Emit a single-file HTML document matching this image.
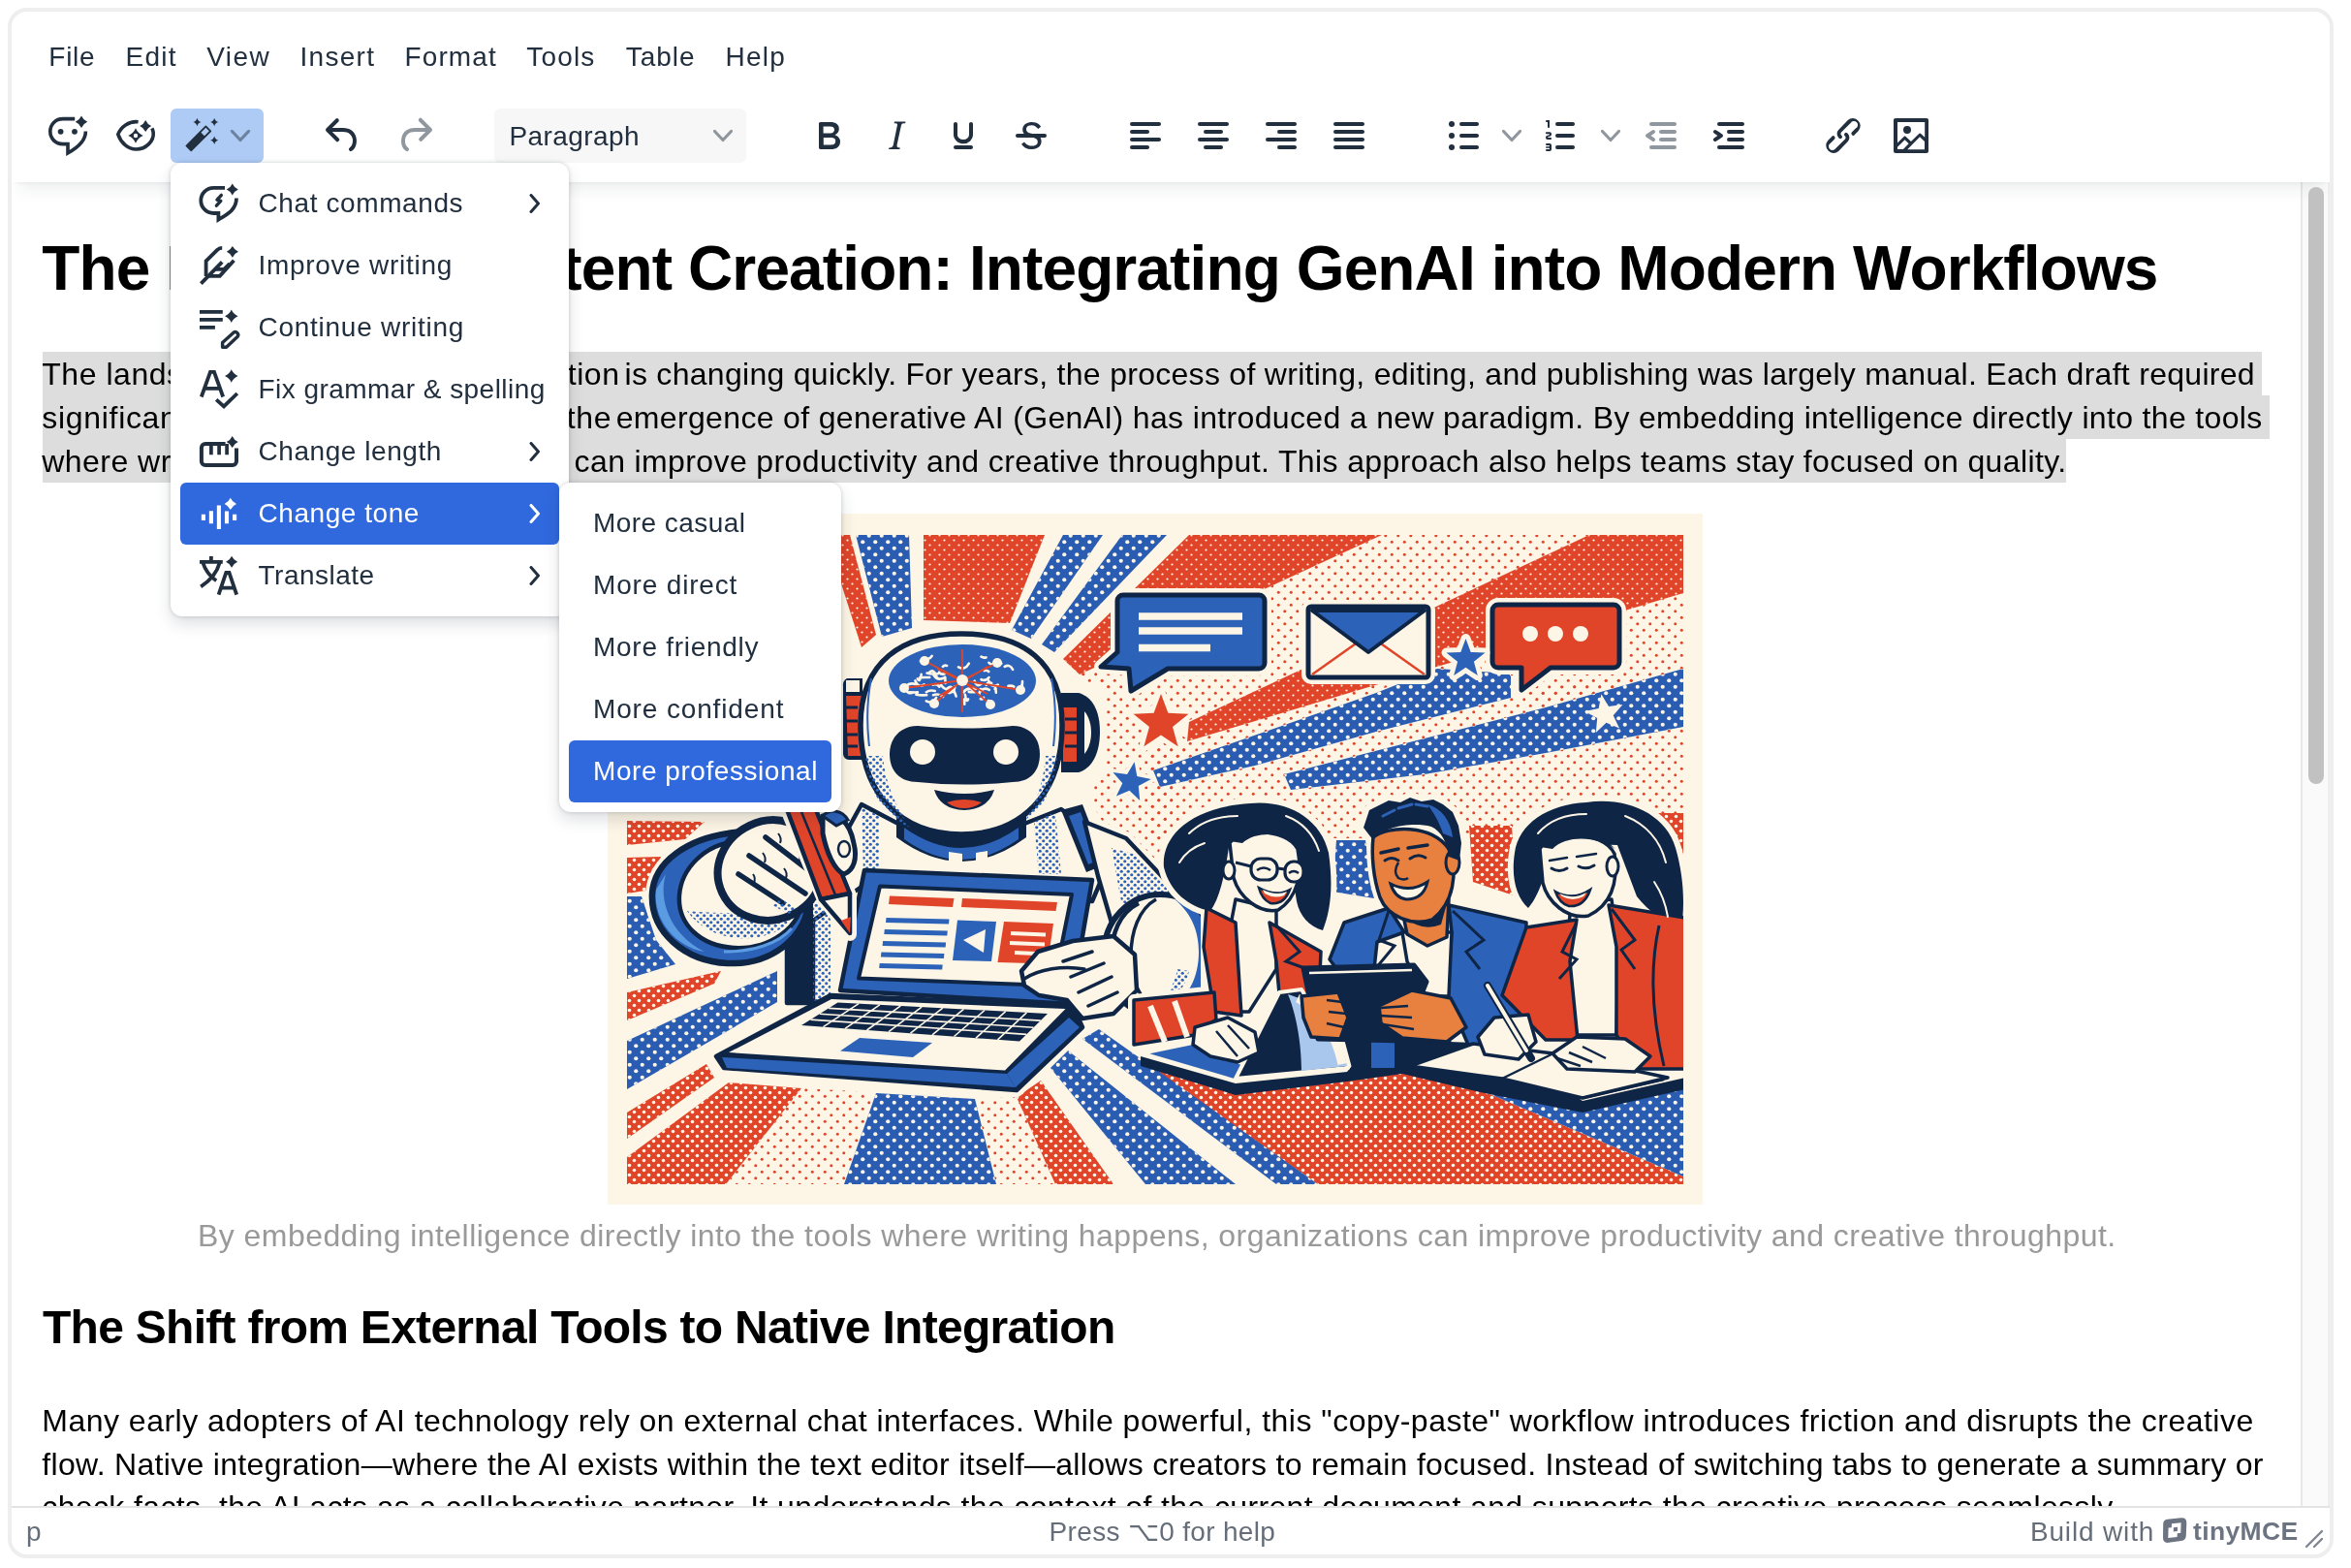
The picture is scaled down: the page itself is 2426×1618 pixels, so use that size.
<!DOCTYPE html>
<html lang="en">
<head>
<meta charset="utf-8">
<title>TinyMCE AI Assistant</title>
<style>
*{box-sizing:border-box;margin:0;padding:0}
html,body{width:2426px;height:1618px;background:#fff;overflow:hidden}
@media (max-width:1400px){html{zoom:.5}}
body{font-family:"Liberation Sans",sans-serif;color:#222f3e;position:relative}
.abs{position:absolute}
#ed{position:absolute;left:8px;top:8px;width:2400px;height:1600px;border:4px solid #eee;border-radius:20px;background:#fff;overflow:hidden}
/* coordinates inside #inner are page coordinates */
#inner{position:absolute;left:-12px;top:-12px;width:2426px;height:1618px;will-change:transform}
.t{position:absolute;white-space:nowrap;line-height:1;transform-origin:0 0}
.mb{font-size:28px;color:#222f3e;top:43px}
#hdrshadow{position:absolute;left:12px;top:12px;width:2392px;height:176px;background:#fff;box-shadow:0 4px 4px -4px rgba(34,47,62,.1),0 16px 16px -8px rgba(34,47,62,.07);z-index:2}
.ic{position:absolute;width:48px;height:48px;top:116px;z-index:3}
.ic svg{width:48px;height:48px;display:block;fill:#222f3e}
.ic.dis svg{fill:rgba(34,47,62,.5)}
.chev{position:absolute;z-index:3}
#content{position:absolute;left:12px;top:188px;width:2364px;height:1366px;overflow:hidden;background:#fff;z-index:1;font-family:"Liberation Sans",sans-serif;color:#000}
#content .t{color:#000}
.body{font-size:32px}
.sel{background:#dddddd}
#sb{position:absolute;left:2374px;top:188px;width:30px;height:1366px;background:#fafafa;border-left:2px solid #e8e8e8;border-right:2px solid #eee;z-index:1}
#thumb{position:absolute;left:2382px;top:193px;width:16px;height:616px;border-radius:8px;background:#c1c1c1;z-index:2}
#status{position:absolute;left:12px;top:1554px;width:2392px;height:50px;border-top:2px solid #e3e3e3;background:#fff;z-index:3}
.st{font-size:28px;color:rgba(34,47,62,.7);top:1566px;z-index:4}
.menu{position:absolute;background:#fff;border-radius:12px;box-shadow:0 0 4px 0 rgba(34,47,62,.2),0 8px 16px 0 rgba(34,47,62,.15);z-index:10}
.mi{position:absolute;left:10px;height:64px;border-radius:6px;font-size:28px;color:#222f3e}
.mi.act{background:#3069de;color:#fff}
.mi .lbl{position:absolute;top:18px;white-space:nowrap;line-height:1}
.mi svg.ico{position:absolute;left:16px;top:8px;width:48px;height:48px;fill:#222f3e}
.mi.act svg.ico{fill:#fff}
.mi svg.car{position:absolute;top:22px;width:20px;height:20px;fill:none;stroke:#222f3e;stroke-width:3;stroke-linecap:round;stroke-linejoin:round}
.mi.act svg.car{stroke:#fff}
#m1{left:50.3px!important;top:45.3px!important;letter-spacing:0.744px}
#m2{left:129.5px!important;top:45.3px!important;letter-spacing:1.263px}
#m3{left:213.2px!important;top:45.3px!important;letter-spacing:1.428px}
#m4{left:309.5px!important;top:45.3px!important;letter-spacing:1.278px}
#m5{left:417.6px!important;top:45.3px!important;letter-spacing:1.085px}
#m6{left:543.2px!important;top:45.3px!important;letter-spacing:1.205px}
#m7{left:645.7px!important;top:45.3px!important;letter-spacing:0.972px}
#m8{left:748.6px!important;top:45.3px!important;letter-spacing:1.202px}
#para{left:525.4px!important;top:127.3px!important;letter-spacing:0.426px}
#h1{left:43.3px!important;top:244.8px!important;letter-spacing:-0.882px}
#p1a{left:43.3px!important;top:369.9px!important;letter-spacing:0.527px}
#p1b{left:644.5px!important;top:369.9px!important;letter-spacing:0.287px}
#p2a{left:43.3px!important;top:414.7px!important;letter-spacing:0.688px}
#p2b{left:635.7px!important;top:414.7px!important;letter-spacing:0.342px}
#p3a{left:43.3px!important;top:459.5px!important;letter-spacing:0.458px}
#p3b{left:592.6px!important;top:459.5px!important;letter-spacing:0.379px}
#cap{left:204.0px!important;top:1259.1px!important;letter-spacing:0.443px}
#h2{left:44.0px!important;top:1346.4px!important;letter-spacing:-0.720px}
#q1{left:43.3px!important;top:1449.7px!important;letter-spacing:0.486px}
#q2{left:43.3px!important;top:1494.5px!important;letter-spacing:0.310px}
#q3{left:43.3px!important;top:1539.3px!important;letter-spacing:0.368px}
#s1{left:27.0px!important;top:1567.1px!important;letter-spacing:0.000px}
#s2{left:1082.6px!important;top:1567.1px!important;letter-spacing:0.323px}
#s3{left:2094.9px!important;top:1567.1px!important;letter-spacing:0.846px}
#mi0{letter-spacing:0.602px}
#mi1{letter-spacing:0.710px}
#mi2{letter-spacing:0.739px}
#mi3{letter-spacing:0.449px}
#mi4{letter-spacing:0.557px}
#mi5{letter-spacing:0.549px}
#mi6{letter-spacing:0.501px}
#sm0{letter-spacing:0.444px}
#sm1{letter-spacing:0.832px}
#sm2{letter-spacing:0.720px}
#sm3{letter-spacing:0.863px}
#sm4{letter-spacing:0.555px}
</style>
</head>
<body>
<div id="ed"><div id="inner">
<div id="hdrshadow"></div>
<!-- menubar -->
<div style="position:absolute;z-index:3;left:0;top:0">
<span class="t mb" id="m1" style="left:52px">File</span>
<span class="t mb" id="m2" style="left:131px">Edit</span>
<span class="t mb" id="m3" style="left:215px">View</span>
<span class="t mb" id="m4" style="left:311px">Insert</span>
<span class="t mb" id="m5" style="left:419px">Format</span>
<span class="t mb" id="m6" style="left:545px">Tools</span>
<span class="t mb" id="m7" style="left:647px">Table</span>
<span class="t mb" id="m8" style="left:750px">Help</span>
</div>
<!-- toolbar -->
<div class="abs" style="left:176px;top:112px;width:96px;height:56px;border-radius:6px;background:#adcbf4;z-index:3"></div>
<div class="abs" style="left:510px;top:112px;width:260px;height:56px;border-radius:6px;background:#f7f7f7;z-index:3"></div>
<span class="t" id="para" style="left:527px;top:127px;font-size:28px;color:#222f3e;z-index:4">Paragraph</span>

<!-- ai chat -->
<div class="ic" style="left:46px"><svg viewBox="0 0 24 24"><path d="M15.6 3.3H9.5C5.6 3.3 2.9 6.2 2.9 9.8c0 3.700 2.700 6.500 6.600 6.500H12V21c4.600-2.500 9.200-6 9.200-11.200" fill="none" stroke="#222f3e" stroke-width="1.8" stroke-linejoin="miter"/><path d="M19.00 1.80Q19.93 3.97 22.10 4.90Q19.93 5.83 19.00 8.00Q18.07 5.83 15.90 4.90Q18.07 3.97 19.00 1.80Z"/><circle cx="8.300" cy="9.900" r="1.450"/><circle cx="15.500" cy="9.900" r="1.450"/></svg></div>
<!-- ai review -->
<div class="ic" style="left:116px"><svg viewBox="0 0 24 24"><path d="M13.300 4.900C8.500 4.300 4.300 7.600 2.900 11.300c1.500 4.400 5.200 7.700 9.300 7.700 5.200 0 9.300-4.300 8.900-8.600-.100-.800-.300-1.500-.700-2.200" fill="none" stroke="#222f3e" stroke-width="1.8" stroke-linecap="butt"/><path d="M17.10 3.95Q18.00 6.05 20.10 6.95Q18.00 7.85 17.10 9.95Q16.20 7.85 14.10 6.95Q16.20 6.05 17.10 3.95Z"/><path fill-rule="evenodd" d="M12.00 8.15Q13.15 10.85 15.85 12.00Q13.15 13.15 12.00 15.85Q10.85 13.15 8.15 12.00Q10.85 10.85 12.00 8.15ZM12 10.900a1.100 1.100 0 1 0 0 2.200a1.100 1.100 0 0 0 0-2.200Z"/></svg></div>
<!-- wand -->
<div class="ic" style="left:184px"><svg viewBox="0 0 24 24"><g transform="rotate(45 10.400 13.450)"><path fill-rule="evenodd" d="M8.650 5.950h3.500a.4.4 0 0 1 .4.4v14.200a.4.4 0 0 1-.4.4h-3.500a.4.4 0 0 1-.4-.4V6.350a.4.4 0 0 1 .4-.4ZM9.150 6.850v3.500h2.500v-3.500Z"/></g><path d="M9.70 2.90Q10.06 4.64 11.80 5.00Q10.06 5.36 9.70 7.10Q9.34 5.36 7.60 5.00Q9.34 4.64 9.70 2.90Z"/><path d="M18.60 2.90Q18.96 4.64 20.70 5.00Q18.96 5.36 18.60 7.10Q18.24 5.36 16.50 5.00Q18.24 4.64 18.60 2.90Z"/><path d="M18.60 12.25Q18.96 13.99 20.70 14.35Q18.96 14.71 18.60 16.45Q18.24 14.71 16.50 14.35Q18.24 13.99 18.60 12.25Z"/></svg></div>
<svg class="chev" style="left:236px;top:128px;width:24px;height:24px" viewBox="0 0 24 24"><path d="M3.500 7.500l8.500 9l8.500-9" fill="none" stroke="#6c829f" stroke-width="3.200" stroke-linecap="round" stroke-linejoin="round"/></svg>
<!-- undo / redo -->
<div class="ic" style="left:330px"><svg viewBox="0 0 24 24"><path d="M6.400 8H12c3.700 0 6.200 2 6.800 5.100.600 2.700-.400 5.600-2.300 6.800a1 1 0 0 1-1-1.800c1.100-.600 1.800-2.700 1.400-4.600-.500-2.100-2.100-3.500-4.900-3.500H6.400l3.300 3.300a1 1 0 1 1-1.400 1.400l-5-5a1 1 0 0 1 0-1.400l5-5a1 1 0 0 1 1.400 1.400L6.400 8Z"/></svg></div>
<div class="ic dis" style="left:404px"><svg viewBox="0 0 24 24"><path d="M17.600 10H12c-2.800 0-4.400 1.400-4.900 3.500-.400 2 .300 4 1.400 4.600a1 1 0 1 1-1 1.800c-2-1.200-2.900-4.100-2.300-6.800.600-3 3-5.100 6.800-5.100h5.600l-3.300-3.300a1 1 0 1 1 1.400-1.400l5 5a1 1 0 0 1 0 1.400l-5 5a1 1 0 0 1-1.400-1.400l3.300-3.300Z"/></svg></div>
<svg class="chev" style="left:734px;top:128px;width:24px;height:24px" viewBox="0 0 24 24"><path d="M3.500 7.500l8.500 9l8.500-9" fill="none" stroke="#90969e" stroke-width="3.200" stroke-linecap="round" stroke-linejoin="round"/></svg>
<!-- B I U S -->
<div class="ic" style="left:831px"><svg viewBox="0 0 24 24"><path d="M7.800 19c-.300 0-.500 0-.600-.200l-.200-.500V5.700c0-.200 0-.400.200-.500l.600-.200h5c1.500 0 2.700.300 3.500 1 .700.600 1.100 1.400 1.100 2.500a3 3 0 0 1-.600 1.900c-.400.600-1 1-1.600 1.200.400.100.900.300 1.300.600s.800.700 1 1.200c.400.400.500 1 .500 1.600 0 1.300-.400 2.300-1.300 3-.800.700-2.100 1-3.800 1H7.800Zm5-8.300c.600 0 1.200-.100 1.600-.500.400-.300.600-.700.600-1.300 0-1.100-.800-1.700-2.300-1.700H9.300v3.500h3.400Zm.500 6c.700 0 1.300-.100 1.700-.400.400-.400.600-.900.600-1.500s-.200-1-.700-1.400c-.400-.300-1-.400-2-.400H9.400v3.800h4Z" fill-rule="evenodd"/></svg></div>
<div class="ic" style="left:901px"><svg viewBox="0 0 24 24"><path d="m16.700 4.700-.1.900h-.3c-.6 0-1 0-1.400.3-.3.3-.4.6-.5 1.100l-2.100 9.800v.6c0 .5.400.8 1.400.8h.2l-.2.800H8l.2-.8h.2c1.100 0 1.800-.5 2-1.500l2-9.800.1-.5c0-.6-.4-.8-1.400-.8h-.3l.2-.9h5.800Z" fill-rule="evenodd"/></svg></div>
<div class="ic" style="left:970px"><svg viewBox="0 0 24 24"><path d="M16 5c.6 0 1 .4 1 1v5.500a4 4 0 0 1-.4 1.800l-1 1.400a5.300 5.300 0 0 1-5.500 1 5 5 0 0 1-1.600-1c-.5-.4-.8-.9-1.100-1.400a4 4 0 0 1-.4-1.800V6c0-.6.4-1 1-1s1 .4 1 1v5.500c0 .3 0 .6.2 1l.6.7a3.300 3.300 0 0 0 2.200.8 3.400 3.400 0 0 0 2.200-.8c.3-.2.4-.5.6-.8l.2-.9V6c0-.6.4-1 1-1ZM8 17h8c.6 0 1 .4 1 1s-.4 1-1 1H8a1 1 0 0 1 0-2Z" fill-rule="evenodd"/></svg></div>
<div class="ic" style="left:1040px"><svg viewBox="0 0 24 24"><path d="M15.600 8.500c-.500-.700-1-1.100-1.300-1.300-.600-.400-1.300-.600-2-.600-2.700 0-2.800 1.700-2.800 2.100 0 1.600 1.800 2 3.200 2.300 4.400.9 4.600 2.800 4.600 3.900 0 1.400-.700 4.100-5 4.100A6.200 6.200 0 0 1 7 16.400l1.500-1.100c.4.6 1.600 2 3.700 2 1.600 0 2.500-.4 3-1.200.4-.8.3-2-.8-2.600-.7-.4-1.600-.7-2.900-1-1-.2-3.900-.8-3.900-3.600C7.600 6 10.300 5 12.400 5c2.900 0 4.200 1.600 4.700 2.400l-1.500 1.100Z"/><path d="M5 11h14a1 1 0 0 1 0 2H5a1 1 0 0 1 0-2Z"/></svg></div>
<!-- align -->
<div class="ic" style="left:1158px"><svg viewBox="0 0 24 24"><path d="M5 5h14c.6 0 1 .4 1 1s-.4 1-1 1H5a1 1 0 1 1 0-2Zm0 4h8c.6 0 1 .4 1 1s-.4 1-1 1H5a1 1 0 1 1 0-2Zm0 8h8c.6 0 1 .4 1 1s-.4 1-1 1H5a1 1 0 0 1 0-2Zm0-4h14c.6 0 1 .4 1 1s-.4 1-1 1H5a1 1 0 0 1 0-2Z"/></svg></div>
<div class="ic" style="left:1228px"><svg viewBox="0 0 24 24"><path d="M5 5h14c.6 0 1 .4 1 1s-.4 1-1 1H5a1 1 0 1 1 0-2Zm3 4h8c.6 0 1 .4 1 1s-.4 1-1 1H8a1 1 0 1 1 0-2Zm0 8h8c.6 0 1 .4 1 1s-.4 1-1 1H8a1 1 0 0 1 0-2Zm-3-4h14c.6 0 1 .4 1 1s-.4 1-1 1H5a1 1 0 0 1 0-2Z"/></svg></div>
<div class="ic" style="left:1298px"><svg viewBox="0 0 24 24"><path d="M5 5h14c.6 0 1 .4 1 1s-.4 1-1 1H5a1 1 0 1 1 0-2Zm6 4h8c.6 0 1 .4 1 1s-.4 1-1 1h-8a1 1 0 0 1 0-2Zm0 8h8c.6 0 1 .4 1 1s-.4 1-1 1h-8a1 1 0 0 1 0-2Zm-6-4h14c.6 0 1 .4 1 1s-.4 1-1 1H5a1 1 0 0 1 0-2Z"/></svg></div>
<div class="ic" style="left:1368px"><svg viewBox="0 0 24 24"><path d="M5 5h14c.6 0 1 .4 1 1s-.4 1-1 1H5a1 1 0 1 1 0-2Zm0 4h14c.6 0 1 .4 1 1s-.4 1-1 1H5a1 1 0 1 1 0-2Zm0 4h14c.6 0 1 .4 1 1s-.4 1-1 1H5a1 1 0 0 1 0-2Zm0 4h14c.6 0 1 .4 1 1s-.4 1-1 1H5a1 1 0 0 1 0-2Z"/></svg></div>
<!-- lists -->
<div class="ic" style="left:1486px"><svg viewBox="0 0 24 24"><path d="M11 5h8c.6 0 1 .4 1 1s-.4 1-1 1h-8a1 1 0 0 1 0-2Zm0 6h8c.6 0 1 .4 1 1s-.4 1-1 1h-8a1 1 0 0 1 0-2Zm0 6h8c.6 0 1 .4 1 1s-.4 1-1 1h-8a1 1 0 0 1 0-2Z"/><circle cx="6" cy="6" r="1.500"/><circle cx="6" cy="12" r="1.500"/><circle cx="6" cy="18" r="1.500"/></svg></div>
<svg class="chev" style="left:1548px;top:128px;width:24px;height:24px" viewBox="0 0 24 24"><path d="M3.500 7.500l8.500 9l8.500-9" fill="none" stroke="#90969e" stroke-width="3.200" stroke-linecap="round" stroke-linejoin="round"/></svg>
<div class="ic" style="left:1587px"><svg viewBox="0 0 24 24"><path d="M10 17h8c.6 0 1 .4 1 1s-.4 1-1 1h-8a1 1 0 0 1 0-2Zm0-6h8c.6 0 1 .4 1 1s-.4 1-1 1h-8a1 1 0 0 1 0-2Zm0-6h8c.6 0 1 .4 1 1s-.4 1-1 1h-8a1 1 0 1 1 0-2ZM6 4v3.500c0 .300-.200.500-.500.500a.5.5 0 0 1-.500-.500V5h-.500a.5.5 0 0 1 0-1H6Zm-1 8.800.2.200h1.300c.3 0 .5.200.5.500s-.2.500-.5.500H4.900a1 1 0 0 1-.900-1V13c0-.4.3-.8.6-1l1.200-.4.200-.3a.2.2 0 0 0-.200-.200H4.500a.5.5 0 0 1-.500-.500c0-.3.2-.5.5-.5h1.600c.5 0 .9.400.9 1v.1c0 .4-.3.800-.6 1l-1.200.4-.200.300ZM7 17v2c0 .6-.4 1-1 1H4.500a.5.5 0 0 1 0-1h1.200c.2 0 .3-.1.3-.3 0-.2-.1-.3-.3-.3H4.400a.4.4 0 1 1 0-.8h1.300c.2 0 .3-.1.3-.3 0-.2-.1-.3-.3-.3H4.500a.5.5 0 1 1 0-1H6c.6 0 1 .4 1 1Z" fill-rule="evenodd"/></svg></div>
<svg class="chev" style="left:1650px;top:128px;width:24px;height:24px" viewBox="0 0 24 24"><path d="M3.500 7.500l8.500 9l8.500-9" fill="none" stroke="#90969e" stroke-width="3.200" stroke-linecap="round" stroke-linejoin="round"/></svg>
<div class="ic dis" style="left:1690px"><svg viewBox="0 0 24 24"><path d="M7 5h12c.6 0 1 .4 1 1s-.4 1-1 1H7a1 1 0 1 1 0-2Zm5 4h7c.6 0 1 .4 1 1s-.4 1-1 1h-7a1 1 0 0 1 0-2Zm0 4h7c.6 0 1 .4 1 1s-.4 1-1 1h-7a1 1 0 0 1 0-2Zm-5 4h12a1 1 0 0 1 0 2H7a1 1 0 0 1 0-2Zm1.600-3.800a1 1 0 0 1-1.200 1.600l-3-2a1 1 0 0 1 0-1.600l3-2a1 1 0 0 1 1.200 1.600L6.800 12l1.800 1.200Z" fill-rule="evenodd"/></svg></div>
<div class="ic" style="left:1760px"><svg viewBox="0 0 24 24"><path d="M7 5h12c.6 0 1 .4 1 1s-.4 1-1 1H7a1 1 0 1 1 0-2Zm5 4h7c.6 0 1 .4 1 1s-.4 1-1 1h-7a1 1 0 0 1 0-2Zm0 4h7c.6 0 1 .4 1 1s-.4 1-1 1h-7a1 1 0 0 1 0-2Zm-5 4h12a1 1 0 0 1 0 2H7a1 1 0 0 1 0-2Zm-2.600-3.800L6.200 12l-1.800-1.200a1 1 0 0 1 1.200-1.600l3 2a1 1 0 0 1 0 1.600l-3 2a1 1 0 1 1-1.200-1.600Z" fill-rule="evenodd"/></svg></div>
<!-- link / image -->
<div class="ic" style="left:1878px"><svg viewBox="0 0 24 24"><path d="M6.200 12.300a1 1 0 0 1 1.400 1.400l-2 2a2 2 0 1 0 2.600 2.800l4.800-4.800a1 1 0 0 0 0-1.400 1 1 0 1 1 1.400-1.300 2.900 2.900 0 0 1 0 4L9.600 20a3.900 3.900 0 0 1-5.500-5.500l2-2Zm11.600-.600a1 1 0 0 1-1.400-1.400l2-2a2 2 0 1 0-2.600-2.800L11 10.300a1 1 0 0 0 0 1.400A1 1 0 1 1 9.600 13a2.900 2.900 0 0 1 0-4L14.400 4a3.900 3.900 0 0 1 5.500 5.500l-2 2Z"/></svg></div>
<div class="ic" style="left:1948px"><svg viewBox="0 0 24 24"><path d="m5 15.700 3.300-3.200c.3-.3.7-.3 1 0L12 15l4.100-4c.3-.4.8-.4 1 0l2 1.900V5H5v10.700ZM5 18V19h3l2.800-2.900-2-2L5 17.900Zm14-3-2.500-2.400-6.400 6.500H19v-4ZM4 3h16c.6 0 1 .4 1 1v16c0 .6-.4 1-1 1H4a1 1 0 0 1-1-1V4c0-.6.4-1 1-1Zm6 8a2 2 0 1 0 0-4 2 2 0 0 0 0 4Z"/></svg></div>
<!-- content (page coordinates) -->
<div id="content" style="left:0;top:0;width:2426px;height:1618px;background:none">
<span class="t" id="h1" style="left:44px;top:240px;font-size:64px;font-weight:bold">The Future of Content Creation: Integrating GenAI into Modern Workflows</span>
<div class="abs sel" style="left:44px;top:363px;width:2290px;height:45px"></div>
<div class="abs sel" style="left:44px;top:408px;width:2298px;height:45px"></div>
<div class="abs sel" style="left:44px;top:453px;width:2088px;height:45px"></div>
<span class="t body" id="p1a" style="left:44px;top:368px">The landscape of digital content creation</span>
<span class="t body" id="p1b" style="left:646px;top:368px">is changing quickly. For years, the process of writing, editing, and publishing was largely manual. Each draft required</span>
<span class="t body" id="p2a" style="left:44px;top:413px">significant time and effort. However, the</span>
<span class="t body" id="p2b" style="left:638px;top:413px">emergence of generative AI (GenAI) has introduced a new paradigm. By embedding intelligence directly into the tools</span>
<span class="t body" id="p3a" style="left:44px;top:458px">where writing happens, organizations</span>
<span class="t body" id="p3b" style="left:595px;top:458px">can improve productivity and creative throughput. This approach also helps teams stay focused on quality.</span>
<svg class="abs" style="left:627px;top:530px;width:1130px;height:713px" viewBox="0 0 1130 713">
<defs>
<clipPath id="art"><rect x="20" y="22" width="1090" height="670"/></clipPath>
<pattern id="pd" width="10" height="10" patternUnits="userSpaceOnUse"><circle cx="2.5" cy="2.5" r="1.8" fill="#fdf5e5"/><circle cx="7.5" cy="7.5" r="1.8" fill="#fdf5e5"/></pattern>
<pattern id="pds" width="10" height="10" patternUnits="userSpaceOnUse"><circle cx="2.5" cy="2.5" r="1.1" fill="#fdf5e5"/><circle cx="7.5" cy="7.5" r="1.1" fill="#fdf5e5"/></pattern>
<pattern id="pd2" width="13" height="13" patternUnits="userSpaceOnUse"><circle cx="3.25" cy="3.25" r="2.1" fill="#fdf5e5"/><circle cx="9.75" cy="9.75" r="2.1" fill="#fdf5e5"/></pattern>
<pattern id="pr" width="13" height="13" patternUnits="userSpaceOnUse"><circle cx="3.25" cy="3.25" r="1.5" fill="#e0452a"/><circle cx="9.75" cy="9.75" r="1.5" fill="#e0452a"/></pattern>
<pattern id="pb" width="7" height="7" patternUnits="userSpaceOnUse"><circle cx="1.75" cy="1.75" r="1.6" fill="#2c62b8"/><circle cx="5.25" cy="5.25" r="1.6" fill="#2c62b8"/></pattern>
<g id="rr"><polygon points="225,22 250,22 277,125 262,138" /><polygon points="326,22 451,22 415,113 326,110" /><polygon points="600,22 799,22 487,166 470,150" /><polygon points="1013,22 1110,22 1110,82 598,235 600,215" /></g>
<g id="rr2"><polygon points="20,317 100,318 80,336 20,342" /><polygon points="20,355 55,354 45,388 20,392" /><polygon points="20,494 117,472 110,485 20,523" /><polygon points="20,618 102,568 110,582 20,645" /><polygon points="20,664 125,587 200,593 122,692 20,692" /><polygon points="422,602 447,585 522,692 462,692" /><polygon points="889,322 933,322 938,395 893,380" /><polygon points="1060,309 1110,309 1110,375 1075,360" /><polygon points="557,570 763,572 820,572 913,600 1110,684 1110,692 733,692" /></g>
<g id="bb"><polygon points="256,22 311,22 314,118 283,127" /><polygon points="470,22 511,22 437,129 417,120" /><polygon points="531,22 577,22 461,143 448,135" /><polygon points="932,165 932,190 793,225 668,260 570,282 563,265 693,220 793,185 856,160" /><polygon points="1110,160 1110,220 968,247 843,269 705,285 698,269 843,232 968,200" /><polygon points="20,395 35,395 50,440 70,465 20,480" /><polygon points="20,544 175,472 175,504 20,594" /><polygon points="277,598 379,604 401,692 244,692" /><polygon points="507,532 733,692 690,692 490,542" /><polygon points="475,554 648,692 555,692 457,572" /><polygon points="752,337 782,337 791,397 748,390" /><polygon points="913,600 1110,587 1110,684" /></g>
</defs>
<rect width="1130" height="713" fill="#fdf5e5"/>
<g clip-path="url(#art)">
<g fill="url(#pr)"><polygon points="799,22 1013,22 600,215 560,200 487,166" /><polygon points="1110,82 1110,160 968,200 932,167 856,160 693,220 598,235" /><polygon points="560,240 1110,160 1110,335 560,335" /><polygon points="470,150 560,200 600,235 560,400 500,300 495,170" /><polygon points="200,593 275,597 245,692 122,692" /><polygon points="379,604 422,602 462,692 401,692" /></g>
<use href="#rr" fill="#e0452a"/><use href="#rr" fill="url(#pds)"/><use href="#rr2" fill="#e0452a"/><use href="#rr2" fill="url(#pd)"/>
<use href="#bb" fill="#2a5db2"/><use href="#bb" fill="url(#pd2)"/>
<g>
<path d="M261 218C261 152 305 124 365 124C428 124 469 152 469 218C469 292 425 331 365 331C305 331 261 292 261 218Z" fill="#fdf5e5" stroke="#fdf5e5" stroke-width="14" stroke-linejoin="round"/>
<polygon points="262,300 300,320 365,350 430,320 468,305 498,325 512,372 500,400 262,385 212,420 212,505 185,505 185,430 240,340" fill="#fdf5e5" stroke="#fdf5e5" stroke-width="14" stroke-linejoin="round"/>
<path d="M124 330C170 322 210 346 208 396C206 440 166 466 124 464C80 462 44 432 46 392C48 358 84 336 124 330Z" fill="#fdf5e5" stroke="#fdf5e5" stroke-width="14" stroke-linejoin="round"/>
<polygon points="128,338 170,314 212,316 226,340 226,378 210,402 176,410 140,400 118,372" fill="#fdf5e5" stroke="#fdf5e5" stroke-width="14" stroke-linejoin="round"/>
<polygon points="186,296 214,290 254,394 250,434 230,404" fill="#fdf5e5" stroke="#fdf5e5" stroke-width="14" stroke-linejoin="round"/>
<polygon points="492,318 535,335 582,385 612,425 560,445 520,422 506,374" fill="#fdf5e5" stroke="#fdf5e5" stroke-width="14" stroke-linejoin="round"/>
<path d="M570 393C604 393 627 420 627 455C627 492 604 518 570 518C538 518 512 492 512 455C512 420 538 393 570 393Z" fill="#fdf5e5" stroke="#fdf5e5" stroke-width="14" stroke-linejoin="round"/>
<polygon points="427,472 444,452 480,441 522,436 544,455 546,492 522,516 490,521 474,502 445,497 430,487" fill="#fdf5e5" stroke="#fdf5e5" stroke-width="14" stroke-linejoin="round"/>
<polygon points="265,368 500,378 478,506 240,492" fill="#fdf5e5" stroke="#fdf5e5" stroke-width="14" stroke-linejoin="round"/>
<polygon points="112,560 230,497 480,508 490,530 422,595 120,572" fill="#fdf5e5" stroke="#fdf5e5" stroke-width="14" stroke-linejoin="round"/>
<path d="M243 170h22v84h-22Z M468 183h40v84h-40Z" fill="#fdf5e5" stroke="#fdf5e5" stroke-width="14" stroke-linejoin="round"/>
</g>
<path d="M247 170h16v84h-14a6 6 0 0 1-6-6v-70a8 8 0 0 1 4-8Z" fill="#0f2546"/>
<path d="M246 188h16v62h-14Z" fill="#e0452a"/>
<path d="M246 200h12M246 214h12M246 228h12M246 240h12" stroke="#0f2546" stroke-width="3" fill="none"/>
<path d="M246 172h14v12h-14Z" fill="#fdf5e5"/>
<path d="M468 185h18c14 4 22 18 22 40s-8 38-22 42h-18Z" fill="#0f2546"/>
<path d="M470 200h14v56h-14Z" fill="#e0452a"/>
<path d="M472 212h12M472 226h12M472 240h12" stroke="#0f2546" stroke-width="3" fill="none"/>
<path d="M492 204c5 6 7 14 7 22s-2 16-7 22Z" fill="#fdf5e5"/>
<polygon points="262,300 300,320 365,350 430,320 468,305 498,325 512,372 500,400 262,385 212,420 212,505 185,505 185,430 240,340" fill="#fdf5e5" stroke="#0f2546" stroke-width="4.5" stroke-linejoin="round"/>
<polygon points="186,402 212,396 212,505 186,505" fill="#0f2546"/>
<polygon points="212,398 230,394 230,500 212,505" fill="url(#pb)"/>
<polygon points="262,302 280,312 280,372 264,372" fill="url(#pb)"/>
<polygon points="440,318 462,308 468,372 445,372" fill="url(#pb)"/>
<path d="M298 306Q365 356 432 306L432 334Q365 384 298 334Z" fill="#0f2546"/>
<path d="M306 324Q365 366 424 324L424 336Q365 378 306 336Z" fill="#2c62b8"/>
<path d="M352 349l14 2v12l-14-2ZM380 350l12-2v12l-12 2Z" fill="#fdf5e5"/>
<path d="M261 218C261 152 305 124 365 124C428 124 469 152 469 218C469 292 425 331 365 331C305 331 261 292 261 218Z" fill="#fdf5e5" stroke="#0f2546" stroke-width="5.5"/>
<path d="M266 250C268 285 285 312 312 324C296 300 286 276 284 250Z" fill="url(#pb)"/>
<path d="M464 250C462 280 450 304 430 318C444 296 450 274 452 250Z" fill="url(#pb)"/>
<path d="M272 170C268 190 267 215 270 240" stroke="#2c62b8" stroke-width="2" fill="none"/>
<path d="M458 170C462 190 463 215 460 240" stroke="#2c62b8" stroke-width="2" fill="none"/>
<ellipse cx="366" cy="172.500" rx="76" ry="37.500" fill="#2c62b8"/>
<path d="M355.0 182.5q2.1 4.3 3.4 -4.3M332.2 169.0q-6.2 -0.1 -9.9 0.1M402.8 176.5q-6.0 4.1 -9.6 -4.1M315.9 184.3q-5.3 2.8 -8.4 -2.8M322.9 152.2q1.1 1.0 1.7 -1.0M385.5 171.2q5.0 2.1 8.0 -2.1M380.2 180.8q-2.7 -3.2 -4.3 3.2M384.9 191.1q1.9 1.3 3.1 -1.3M346.5 169.7q-6.2 2.9 -9.9 -2.9M350.1 156.9q-2.6 -0.9 -4.2 0.9M335.8 176.7q4.1 -2.0 6.6 2.0M367.7 192.8q0.4 -3.8 0.6 3.8M362.0 158.4q6.7 3.8 10.8 -3.8M319.9 184.4q-4.9 0.1 -7.8 -0.1M413.4 177.9q3.7 -0.7 5.9 0.7M388.8 162.1q2.7 -0.9 4.4 0.9M331.9 163.9q4.8 -4.4 7.6 4.4M318.0 176.1q-6.2 -2.0 -9.8 2.0M327.4 149.1q4.5 2.2 7.2 -2.2M329.2 187.2q-6.7 0.4 -10.7 -0.4M377.3 181.6q-6.2 -2.7 -9.9 2.7M386.0 182.2q-1.5 -3.7 -2.4 3.7M399.7 181.0q0.7 -3.8 1.1 3.8M390.5 148.4q-3.1 0.8 -5.0 -0.8M328.8 193.4q6.4 3.5 10.3 -3.5M378.7 184.1q-3.7 0.2 -6.0 -0.2M340.7 165.3q-6.9 0.8 -11.1 -0.8M336.0 187.2q6.3 -1.9 10.1 1.9M319.8 170.4q2.5 4.5 3.9 -4.5M409.7 157.9q5.2 -3.0 8.4 3.0M337.8 182.9q-5.6 -1.3 -8.9 1.3M385.1 176.1q-4.1 3.4 -6.5 -3.4M355.3 180.2q-7.0 3.5 -11.2 -3.5M393.8 181.9q-6.6 -3.7 -10.6 3.7M347.6 165.2q-3.5 1.5 -5.5 -1.5M350.7 180.5q4.9 -4.9 7.8 4.9M326.7 176.4q-5.8 4.0 -9.3 -4.0M349.6 183.9q4.6 3.4 7.4 -3.4M427.4 176.6q0.4 3.5 0.6 -3.5M347.9 170.2q0.4 -4.8 0.6 4.8M398.8 155.1q-3.3 1.3 -5.4 -1.3M392.7 193.8q0.5 -2.8 0.7 2.8M352.6 183.7q4.4 -4.8 7.0 4.8M399.2 152.3q4.5 -2.4 7.1 2.4M372.1 191.4q-2.0 4.7 -3.2 -4.7M396.1 174.9q-3.4 -1.9 -5.4 1.9" stroke="#fdf5e5" stroke-width="2.6" fill="none" stroke-linecap="round"/>
<path d="M366 172L306 180M366 172L337 196M366 172L395 197M366 172L426 182M366 172L327 152M366 172L402 154M366 140V205M340 160L392 186M392 158L342 188" stroke="#e0452a" stroke-width="1.8" fill="none"/>
<circle cx="306" cy="180" r="5" fill="#fdf5e5"/>
<circle cx="337" cy="196" r="5" fill="#fdf5e5"/>
<circle cx="395" cy="197" r="5" fill="#fdf5e5"/>
<circle cx="426" cy="182" r="5" fill="#fdf5e5"/>
<circle cx="327" cy="152" r="5" fill="#fdf5e5"/>
<circle cx="402" cy="154" r="5" fill="#fdf5e5"/>
<circle cx="366" cy="172" r="6" fill="#fdf5e5"/>
<path d="M320 219Q368 224 418 219C436 219 446 232 446 248C446 266 436 277 418 277Q368 282 320 277C302 277 291 266 291 248C291 232 302 219 320 219Z" fill="#0f2546"/>
<circle cx="325" cy="246" r="13" fill="#fdf5e5"/><circle cx="411" cy="246" r="13" fill="#fdf5e5"/>
<path d="M337 285Q368 293 399 285Q393 305 368 306Q343 305 337 285Z" fill="#0f2546"/>
<path d="M350 298Q368 292 386 298Q378 304 368 304Q358 304 350 298Z" fill="#e0452a"/>
<polygon points="265,368 500,378 478,506 240,492" fill="#2c62b8" stroke="#0f2546" stroke-width="4.5" stroke-linejoin="round"/>
<polygon points="281,384.5 479,393 460,487 259,479.5" fill="#fdf5e5" stroke="#0f2546" stroke-width="4" stroke-linejoin="round"/>
<polygon points="291,394.5 357.5,397 356,406 290,403" fill="#e0452a"/>
<polygon points="366,397 464,401 462.5,410 365,406" fill="#e0452a"/>
<polygon points="287.5,417 352.5,418.5 352,423.5 287,422" fill="#2c62b8"/>
<polygon points="285.8,429 350.8,430.5 350.3,435.5 285.3,434" fill="#2c62b8"/>
<polygon points="284.1,441 349.1,442.5 348.6,447.5 283.6,446" fill="#2c62b8"/>
<polygon points="282.4,452.5 347.4,454 346.9,459 281.9,457.5" fill="#2c62b8"/>
<polygon points="280.7,464 345.7,465.5 345.2,470.5 280.2,469" fill="#2c62b8"/>
<polygon points="361,419.5 401,421 396,462 356,461" fill="#2c62b8"/>
<polygon points="367,440 390,429 388,453" fill="#fdf5e5"/>
<polygon points="409,421 460,423 454,464.5 402.5,463" fill="#e0452a"/>
<path d="M416 433l36 1.500M415 443l36 1.500M420 453l28 1.200" stroke="#fdf5e5" stroke-width="4" fill="none"/>
<polygon points="112,560 230,497 480,508 490,530 422,595 120,572" fill="#0f2546" stroke="#0f2546" stroke-width="4.5" stroke-linejoin="round"/>
<polygon points="125,556 231,501 472.5,511 410,574.5" fill="#fdf5e5"/>
<polygon points="118,561 412,578 421,592 123,572" fill="#2c62b8"/>
<polygon points="412,578 476,520 487,530 421,592" fill="#2c62b8"/>
<polygon points="237.5,504.5 454,516 425,544.5 200,528" fill="#0f2546"/>
<path d="M228.1 510.4L446.8 523.1M218.8 516.2L439.5 530.2M209.4 522.1L432.2 537.4M259.1 505.6L222.5 529.6M280.8 506.8L245.0 531.3M302.4 507.9L267.5 533.0M324.1 509.1L290.0 534.6M345.8 510.2L312.5 536.2M367.4 511.4L335.0 537.9M389.0 512.5L357.5 539.5M410.7 513.7L380.0 541.2M432.4 514.9L402.5 542.9" stroke="#fdf5e5" stroke-width="1.6" fill="none"/>
<polygon points="260,541 335,546 315,561 240,554.5" fill="#2c62b8"/>
<path d="M124 330C170 322 210 346 208 396C206 440 166 466 124 464C80 462 44 432 46 392C48 358 84 336 124 330Z" fill="#2c62b8" stroke="#0f2546" stroke-width="6.5"/>
<path d="M60 372C52 398 64 434 100 452C72 448 46 420 50 388Z" fill="#5b9be2"/>
<path d="M132 338C172 334 204 356 202 394C200 428 166 450 130 448C96 446 72 424 74 394C76 366 100 342 132 338Z" fill="#fdf5e5" stroke="#0f2546" stroke-width="4.5"/>
<path d="M82 410C100 436 140 446 172 432C186 426 194 416 198 406C180 412 120 414 82 410Z" fill="url(#pb)"/>
<path d="M120 452C150 452 176 444 190 428" stroke="#5b9be2" stroke-width="3" fill="none"/>
<ellipse cx="168" cy="368" rx="55" ry="51" fill="#fdf5e5" stroke="#0f2546" stroke-width="8" transform="rotate(-25 168 368)"/>
<path d="M163 334L219 377M146 353L204 392M135 372L181 402" stroke="#0f2546" stroke-width="5.5" fill="none" stroke-linecap="round"/>
<path d="M176 330q4 5 2 10M196 348q4 5 2 10M160 350q4 5 2 10M182 366q4 5 2 10M150 372q3 4 1 9" stroke="#0f2546" stroke-width="2" fill="none"/>
<path d="M176 396L196 408L188 414L170 404Z" fill="url(#pb)"/>
<polygon points="183,300 211,296 250,394 250,434 222,396" fill="#fdf5e5" stroke="#fdf5e5" stroke-width="14" stroke-linejoin="round"/>
<polygon points="183,300 211,296 250,392 220,398" fill="#e0452a" stroke="#0f2546" stroke-width="4.5" stroke-linejoin="round"/>
<path d="M196 298L236 396" stroke="#0f2546" stroke-width="2.5" fill="none"/>
<polygon points="220,398 250,392 250,433" fill="#fdf5e5" stroke="#0f2546" stroke-width="4.5" stroke-linejoin="round"/>
<polygon points="241,420 251,416 250,433" fill="#e0452a"/>
<path d="M222 312C236 306 250 318 254 340C258 356 254 368 244 372C234 368 226 350 222 330Z" fill="#fdf5e5" stroke="#0f2546" stroke-width="5"/>
<path d="M222 312C230 304 242 306 248 316L236 322Z" fill="#2c62b8" stroke="#0f2546" stroke-width="3"/>
<ellipse cx="244" cy="346" rx="6" ry="8" fill="#fdf5e5" stroke="#0f2546" stroke-width="2.500"/>
<polygon points="468,306 490,300 514,362 494,370" fill="#0f2546"/>
<polygon points="476,312 488,308 506,358 496,362" fill="#2c62b8"/>
<polygon points="492,318 535,335 582,385 612,425 560,445 520,422 506,374" fill="#fdf5e5" stroke="#0f2546" stroke-width="4.5" stroke-linejoin="round"/>
<polygon points="520,345 545,352 585,395 560,420 530,400" fill="url(#pb)"/>
<path d="M570 393C604 393 627 420 627 455C627 492 604 518 570 518C538 518 512 492 512 455C512 420 538 393 570 393Z" fill="#fdf5e5" stroke="#0f2546" stroke-width="6"/>
<path d="M585 398C612 406 626 430 624 460C622 492 602 514 574 516C600 500 610 478 610 452C610 428 600 410 585 398Z" fill="#2c62b8"/>
<path d="M548 402C528 412 520 434 520 456C520 482 532 502 552 512" stroke="#0f2546" stroke-width="4.5" fill="none"/>
<path d="M566 398C548 408 540 432 540 456C540 482 550 504 568 514" stroke="#0f2546" stroke-width="3.5" fill="none"/>
<path d="M588 470C584 490 574 504 560 510C580 506 596 492 600 472Z" fill="url(#pb)"/>
<polygon points="427,472 444,452 480,441 522,436 544,455 546,492 522,516 490,521 474,502 445,497 430,487" fill="#fdf5e5" stroke="#0f2546" stroke-width="4.5" stroke-linejoin="round"/>
<path d="M470 462L500 452M478 478L512 464M486 494L520 478M496 508L526 494" stroke="#0f2546" stroke-width="3.5" fill="none" stroke-linecap="round"/>
<path d="M430 480C445 470 470 466 492 470" stroke="#0f2546" stroke-width="3.5" fill="none" stroke-linecap="round"/>
<g>
<path d="M663 299C702 295 736 315 744 350C749 385 746 410 738 430C724 426 714 415 711 400L702 342L642 338C637 372 632 396 622 410C600 406 580 390 574 365C571 334 600 303 663 299Z" fill="#fdf5e5" stroke="#fdf5e5" stroke-width="12" stroke-linejoin="round"/>
<polygon points="618,407 650,404 688,420 736,452 740,500 700,500 660,540 640,560 600,560 543,548 543,502 618,494" fill="#fdf5e5" stroke="#fdf5e5" stroke-width="12" stroke-linejoin="round"/>
<path d="M780 324L786 306L796 301L806 296L818 298L828 293L840 297L852 295L862 300L872 308L878 322L881 340L879 358L868 354C866 338 860 328 850 323C830 318 800 323 790 337Z" fill="#fdf5e5" stroke="#fdf5e5" stroke-width="12" stroke-linejoin="round"/>
<path d="M790 334C805 322 850 320 868 346C878 370 873 402 851 419C830 426 805 416 797 396C790 376 788 352 790 334Z" fill="#fdf5e5" stroke="#fdf5e5" stroke-width="12" stroke-linejoin="round"/>
<polygon points="745,460 760,422 806,407 868,404 948,422 945,548 745,548" fill="#fdf5e5" stroke="#fdf5e5" stroke-width="12" stroke-linejoin="round"/>
<path d="M1010 298C1052 292 1092 310 1102 345C1110 372 1112 402 1108 428C1090 422 1074 410 1062 395L1042 342L976 340C969 366 963 392 950 407C938 396 932 376 936 350C940 320 970 300 1010 298Z" fill="#fdf5e5" stroke="#fdf5e5" stroke-width="12" stroke-linejoin="round"/>
<polygon points="923,497 948,427 1000,419 1033,404 1112,417 1112,575 923,560" fill="#fdf5e5" stroke="#fdf5e5" stroke-width="12" stroke-linejoin="round"/>
<polygon points="718,469 832,466 845,483 839,498 868,545 733,542" fill="#fdf5e5" stroke="#fdf5e5" stroke-width="12" stroke-linejoin="round"/>
<polygon points="693,494 716,491 764,572 648,583" fill="#fdf5e5" stroke="#fdf5e5" stroke-width="12" stroke-linejoin="round"/>
<polygon points="553,557 606,546 664,572 648,585" fill="#fdf5e5" stroke="#fdf5e5" stroke-width="12" stroke-linejoin="round"/>
<polygon points="828,570 893,547 976,557 1094,582 1006,603 923,583" fill="#fdf5e5" stroke="#fdf5e5" stroke-width="12" stroke-linejoin="round"/>
</g>
<polygon points="550,560 648,588 763,576 768,570 868,570 868,545 945,548 945,562 1006,606 1112,582 1112,594 1006,618 905,598 820,578 763,586 648,600 550,570" fill="#0f2546"/>
<path d="M663 299C702 295 736 315 744 350C749 385 746 410 738 430C724 426 714 415 711 400L702 342L642 338C637 372 632 396 622 410C600 406 580 390 574 365C571 334 600 303 663 299Z" fill="#0f2546"/>
<polygon points="648,398 690,408 690,470 662,514 644,514 640,440" fill="#fdf5e5" stroke="#0f2546" stroke-width="3.5" stroke-linejoin="round"/>
<polygon points="618,407 648,422 654,518 626,514 615,447" fill="#e0452a" stroke="#0f2546" stroke-width="3.5" stroke-linejoin="round"/>
<polygon points="683,422 736,452 734,498 693,495 690,462" fill="#e0452a" stroke="#0f2546" stroke-width="3.5" stroke-linejoin="round"/>
<path d="M690 425L714 452L700 462L722 470" stroke="#0f2546" stroke-width="3" fill="none"/>
<polygon points="543,502 626,494 628,522 606,538 543,548" fill="#e0452a" stroke="#0f2546" stroke-width="3.5" stroke-linejoin="round"/>
<path d="M560 508L575 545M585 503L598 540" stroke="#fdf5e5" stroke-width="6" fill="none"/>
<path d="M642 340C650 326 700 323 712 346C717 372 712 396 692 409C672 413 652 396 646 376Z" fill="#fdf5e5" stroke="#0f2546" stroke-width="3.5" stroke-linejoin="round"/>
<ellipse cx="641" cy="368" rx="6" ry="9" fill="#fdf5e5" stroke="#0f2546" stroke-width="3"/>
<rect x="664" y="356" width="27" height="22" rx="10" fill="#fdf5e5" stroke="#0f2546" stroke-width="3.200"/>
<rect x="699" y="359" width="19" height="21" rx="9" fill="#fdf5e5" stroke="#0f2546" stroke-width="3.200"/>
<path d="M691 366L699 367M664 364L648 360" stroke="#0f2546" stroke-width="3" fill="none"/>
<path d="M670 368q7-5 14 0M703 371q5-4 10 0" stroke="#0f2546" stroke-width="2.5" fill="none"/>
<path d="M672 386Q690 396 704 388Q698 404 684 402Q675 398 672 386Z" fill="#e0452a" stroke="#0f2546" stroke-width="2.5"/>
<path d="M676 388Q690 395 701 390L698 394Q688 398 678 392Z" fill="#fdf5e5"/>
<path d="M642 338C652 318 690 312 712 340C700 330 670 326 655 340Z" fill="#0f2546"/>
<path d="M600 330C612 318 630 312 650 312M590 360C596 350 604 344 616 340M700 312C716 318 728 330 734 348" stroke="#fdf5e5" stroke-width="2" fill="none" stroke-linecap="round"/>
<polygon points="553,557 606,546 664,572 648,585" fill="#2c62b8" stroke="#fdf5e5" stroke-width="3" stroke-linejoin="round"/>
<polygon points="693,494 716,491 764,572 648,583" fill="#0f2546" stroke="#fdf5e5" stroke-width="4" stroke-linejoin="round"/>
<path d="M702 496C735 505 756 535 763 570L716 575C716 545 710 515 702 496Z" fill="#a9c6ec"/>
<path d="M712 500C738 512 752 540 758 568" stroke="#fdf5e5" stroke-width="9" fill="none"/>
<polygon points="606,530 640,520 668,535 672,556 650,566 622,560 604,548" fill="#fdf5e5" stroke="#0f2546" stroke-width="3.5" stroke-linejoin="round"/>
<path d="M640 528L662 552M628 534L650 560" stroke="#0f2546" stroke-width="2.5" fill="none"/>
<polygon points="745,460 760,422 806,407 822,432 794,442 791,470 760,480" fill="#2c62b8" stroke="#0f2546" stroke-width="3.5" stroke-linejoin="round"/>
<polygon points="868,404 948,422 945,548 888,548 866,497 871,432" fill="#2c62b8" stroke="#0f2546" stroke-width="3.5" stroke-linejoin="round"/>
<polygon points="820,432 871,432 868,498 843,498 825,462" fill="#fdf5e5" stroke="#0f2546" stroke-width="3.5" stroke-linejoin="round"/>
<path d="M806 410L796 440L812 446L792 470M872 410L904 440L886 452L900 470" stroke="#0f2546" stroke-width="3" fill="none"/>
<polygon points="818,400 868,398 866,437 846,446 825,434" fill="#e8803f" stroke="#0f2546" stroke-width="3.5" stroke-linejoin="round"/>
<path d="M818 404L866 402L860 424Q840 432 822 416Z" fill="#0f2546"/>
<path d="M790 334C805 322 850 320 868 346C878 370 873 402 851 419C830 426 805 416 797 396C790 376 788 352 790 334Z" fill="#e8803f" stroke="#0f2546" stroke-width="3.5" stroke-linejoin="round"/>
<ellipse cx="872" cy="360" rx="7" ry="12" fill="#e8803f" stroke="#0f2546" stroke-width="3"/>
<path d="M780 324L786 306L796 301L806 296L818 298L828 293L840 297L852 295L862 300L872 308L878 322L881 340L879 358L868 354C866 338 860 328 850 323C830 318 800 323 790 337Z" fill="#0f2546"/>
<path d="M846 300C860 304 870 316 872 334L862 330C858 318 852 308 846 300Z" fill="#2c62b8"/>
<path d="M800 312L812 306M816 304L830 300M834 300L846 302" stroke="#2c62b8" stroke-width="3" fill="none" stroke-linecap="round"/>
<path d="M802 358q7-5 14 0M828 356q8-6 16-1" stroke="#0f2546" stroke-width="3" fill="none" stroke-linecap="round"/>
<path d="M798 350l18-4M826 345l20-3" stroke="#0f2546" stroke-width="3.5" fill="none" stroke-linecap="round"/>
<path d="M816 360q-6 10 0 16q6 3 10 0" stroke="#0f2546" stroke-width="2.5" fill="none"/>
<path d="M808 382Q828 392 846 380Q842 398 824 398Q812 396 808 382Z" fill="#fdf5e5" stroke="#0f2546" stroke-width="3"/>
<polygon points="760,542 868,544 868,572 768,572" fill="#0f2546"/>
<polygon points="788,545 812,545 812,572 788,572" fill="#2c62b8"/>
<polygon points="718,469 832,466 845,483 839,498 868,545 733,542" fill="#0f2546" stroke="#0f2546" stroke-width="5" stroke-linejoin="round"/>
<path d="M724 474L830 471" stroke="#fdf5e5" stroke-width="2.5" fill="none"/>
<polygon points="716,498 754,494 764,520 756,542 726,540 718,520" fill="#e8803f" stroke="#0f2546" stroke-width="3.5" stroke-linejoin="round"/>
<path d="M742 502L758 504M744 514L762 516M742 526L760 530" stroke="#0f2546" stroke-width="2.5" fill="none"/>
<polygon points="796,508 830,492 870,500 886,530 866,545 820,541 798,526" fill="#e8803f" stroke="#0f2546" stroke-width="3.5" stroke-linejoin="round"/>
<path d="M798 510L826 508M797 518L830 520M800 527L832 532" stroke="#0f2546" stroke-width="2.5" fill="none"/>
<path d="M1010 298C1052 292 1092 310 1102 345C1110 372 1112 402 1108 428C1090 422 1074 410 1062 395L1042 342L976 340C969 366 963 392 950 407C938 396 932 376 936 350C940 320 970 300 1010 298Z" fill="#0f2546"/>
<polygon points="994,402 1036,398 1043,450 1041,538 1000,538 990,450" fill="#fdf5e5" stroke="#0f2546" stroke-width="3.5" stroke-linejoin="round"/>
<polygon points="923,497 948,427 1000,419 993,462 1001,543 968,543" fill="#e0452a" stroke="#0f2546" stroke-width="3.5" stroke-linejoin="round"/>
<polygon points="1033,404 1112,417 1112,573 1064,573 1041,538 1041,447" fill="#e0452a" stroke="#0f2546" stroke-width="3.5" stroke-linejoin="round"/>
<path d="M1000 422L985 452L1000 460L982 480M1036 408L1060 440L1046 450L1060 470M1085 425C1075 470 1078 520 1090 570" stroke="#0f2546" stroke-width="3" fill="none"/>
<path d="M962 346C970 328 1026 325 1039 351C1043 380 1037 403 1012 415C990 419 970 401 965 381Z" fill="#fdf5e5" stroke="#0f2546" stroke-width="3.5" stroke-linejoin="round"/>
<ellipse cx="1037" cy="364" rx="6" ry="10" fill="#fdf5e5" stroke="#0f2546" stroke-width="3"/>
<path d="M962 344C972 322 1010 316 1040 346C1024 334 990 330 975 346Z" fill="#0f2546"/>
<path d="M974 366q8 5 16 0M1002 364q8 4 16-1" stroke="#0f2546" stroke-width="3" fill="none" stroke-linecap="round"/>
<path d="M972 358l18-3M1000 354l20-3" stroke="#0f2546" stroke-width="2.5" fill="none" stroke-linecap="round"/>
<path d="M978 390Q996 400 1014 388Q1008 406 992 405Q982 402 978 390Z" fill="#e0452a" stroke="#0f2546" stroke-width="2.5"/>
<path d="M982 392Q996 399 1010 391L1007 395Q996 401 985 395Z" fill="#fdf5e5"/>
<path d="M960 330C972 316 990 310 1010 310M1050 312C1070 320 1086 336 1092 360M1080 380C1088 392 1092 404 1094 416" stroke="#fdf5e5" stroke-width="2" fill="none" stroke-linecap="round"/>
<polygon points="828,570 893,547 976,557 1094,582 1006,603 923,583" fill="#fdf5e5" stroke="#0f2546" stroke-width="3.5" stroke-linejoin="round"/>
<path d="M923 583L976 557M840 572L922 590M1006 603L1090 584" stroke="#0f2546" stroke-width="2.5" fill="none"/>
<polygon points="898,540 915,520 950,517 958,545 940,563 905,558" fill="#fdf5e5" stroke="#0f2546" stroke-width="3.5" stroke-linejoin="round"/>
<path d="M908 487L953 562" stroke="#0f2546" stroke-width="8" fill="none" stroke-linecap="round"/>
<path d="M908 487L948 554" stroke="#fdf5e5" stroke-width="4" fill="none" stroke-linecap="round"/>
<polygon points="975,557 1000,540 1050,542 1076,560 1060,576 990,573" fill="#fdf5e5" stroke="#0f2546" stroke-width="3.5" stroke-linejoin="round"/>
<path d="M980 562L1004 570M992 556L1016 566M1006 550L1030 562" stroke="#0f2546" stroke-width="2.5" fill="none"/>
<path d="M532 84H672a6 6 0 0 1 6 6V154a6 6 0 0 1-6 6H578L540 183L538 160L509 158L526 143V90a6 6 0 0 1 6-6Z" fill="#fdf5e5" stroke="#fdf5e5" stroke-width="14" stroke-linejoin="round"/>
<path d="M532 84H672a6 6 0 0 1 6 6V154a6 6 0 0 1-6 6H578L540 183L538 160L509 158L526 143V90a6 6 0 0 1 6-6Z" fill="#2c62b8" stroke="#0f2546" stroke-width="5" stroke-linejoin="round"/>
<path d="M548 106H655M548 121H655M548 138.500H622" stroke="#fdf5e5" stroke-width="7.5" fill="none"/>
<rect x="723" y="96" width="124" height="73" rx="3" fill="#fdf5e5" stroke="#fdf5e5" stroke-width="14"/>
<rect x="723" y="96" width="124" height="73" rx="3" fill="#fdf5e5" stroke="#0f2546" stroke-width="5"/>
<path d="M727 166L775 132M843 166L795 132" stroke="#e0452a" stroke-width="2.5" fill="none"/>
<polygon points="727,100 843,100 785,143" fill="#2c62b8" stroke="#0f2546" stroke-width="4" stroke-linejoin="round"/>
<path d="M919 94H1038a6 6 0 0 1 6 6V153a6 6 0 0 1-6 6H973L943 182V159H919a6 6 0 0 1-6-6V100a6 6 0 0 1 6-6Z" fill="#fdf5e5" stroke="#fdf5e5" stroke-width="14" stroke-linejoin="round"/>
<path d="M919 94H1038a6 6 0 0 1 6 6V153a6 6 0 0 1-6 6H973L943 182V159H919a6 6 0 0 1-6-6V100a6 6 0 0 1 6-6Z" fill="#e0452a" stroke="#0f2546" stroke-width="5" stroke-linejoin="round"/>
<circle cx="952" cy="124" r="8" fill="#fdf5e5"/>
<circle cx="978" cy="124" r="8" fill="#fdf5e5"/>
<circle cx="1004" cy="124" r="8" fill="#fdf5e5"/>
<polygon points="571,186 578.4,205.8 599.5,206.7 583,219.9 588.6,240.3 571,228.6 553.4,240.3 559,219.9 542.5,206.7 563.6,205.8" fill="#fdf5e5" stroke="#fdf5e5" stroke-width="10" stroke-linejoin="round"/>
<polygon points="571,186 578.4,205.8 599.5,206.7 583,219.9 588.6,240.3 571,228.6 553.4,240.3 559,219.9 542.5,206.7 563.6,205.8" fill="#e0452a"/>
<polygon points="543.6,256.3 546.3,270.9 560.8,274.1 547.8,281.1 549.2,295.9 538.5,285.7 524.9,291.6 531.3,278.2 521.5,267.1 536.1,269.1" fill="#fdf5e5" stroke="#fdf5e5" stroke-width="8" stroke-linejoin="round"/>
<polygon points="543.6,256.3 546.3,270.9 560.8,274.1 547.8,281.1 549.2,295.9 538.5,285.7 524.9,291.6 531.3,278.2 521.5,267.1 536.1,269.1" fill="#2c62b8"/>
<polygon points="885.5,129 890.7,142.9 905.5,143.5 893.9,152.7 897.8,167 885.5,158.8 873.2,167 877.1,152.7 865.5,143.5 880.3,142.9" fill="#fdf5e5" stroke="#fdf5e5" stroke-width="10" stroke-linejoin="round"/>
<polygon points="885.5,129 890.7,142.9 905.5,143.5 893.9,152.7 897.8,167 885.5,158.8 873.2,167 877.1,152.7 865.5,143.5 880.3,142.9" fill="#2c62b8"/>
<polygon points="1025.4,186.3 1032.9,199.1 1047.5,197.1 1037.7,208.2 1044.1,221.6 1030.5,215.7 1019.8,225.9 1021.2,211.1 1008.2,204.1 1022.7,200.9" fill="#fdf5e5"/>

</g>
</svg>
<span class="t body" id="cap" style="left:206px;top:1257px;color:#999">By embedding intelligence directly into the tools where writing happens, organizations can improve productivity and creative throughput.</span>
<span class="t" id="h2" style="left:44px;top:1346px;font-size:48px;font-weight:bold">The Shift from External Tools to Native Integration</span>
<span class="t body" id="q1" style="left:44px;top:1448px">Many early adopters of AI technology rely on external chat interfaces. While powerful, this "copy-paste" workflow introduces friction and disrupts the creative</span>
<span class="t body" id="q2" style="left:44px;top:1493px">flow. Native integration—where the AI exists within the text editor itself—allows creators to remain focused. Instead of switching tabs to generate a summary or</span>
<span class="t body" id="q3" style="left:44px;top:1538px">check facts, the AI acts as a collaborative partner. It understands the context of the current document and supports the creative process seamlessly.</span>
</div>
<div id="sb"></div><div id="thumb"></div>
<div id="status"></div>
<span class="t st" id="s1" style="left:29px">p</span>
<span class="t st" id="s2" style="left:1085px">Press ⌥0 for help</span>
<span class="t st" id="s3" style="left:2097px">Build with</span>
<svg class="abs" style="left:2230px;top:1565px;width:28px;height:28px;z-index:4" viewBox="0 0 28 28"><path fill="#6b7480" fill-rule="evenodd" d="M6.500 2.800L20.500 1.200Q26.500 0.700 26.300 6.500L25.800 19.500Q25.600 24.300 20.800 25L7.800 26.800Q2 27.500 2 21.800L2.200 7.500Q2.300 3.300 6.500 2.800ZM11 7.300L20.600 6.200L20.300 16.800L16.800 17.200L16.600 21L7.300 22L7.600 11.600L10.800 11.200ZM12.900 11.300L12.800 15.400L16.900 15L17 10.800Z"/></svg>
<span class="t" id="s4" style="left:2263px;top:1566.6px;font-size:26.5px;font-weight:bold;color:#6b7480;z-index:4;letter-spacing:0.35px">tinyMCE</span>
<svg class="abs" style="left:2377px;top:1577px;width:22px;height:22px;z-index:4" viewBox="0 0 22 22"><path d="M3 19L19 3M11 19L19 11" stroke="#7f8791" stroke-width="2.400" stroke-linecap="round" fill="none"/></svg>
<!-- main dropdown menu -->
<div class="menu" style="left:176px;top:168px;width:411px;height:468px">
<div class="mi" style="top:10px;width:391px"><svg class="ico" viewBox="0 0 24 24"><path d="M15 3.900H9.200a6.550 6.550 0 0 0 0 13.100H11.700V20.300C15.500 18 21 15.500 21 9.300" stroke="currentColor" fill="none" stroke-width="1.900"/><path d="M13.200 7.700L11 10.100L12.900 10.700L10.700 13.100" stroke="currentColor" fill="none" stroke-width="1.700" stroke-linecap="round" stroke-linejoin="round"/><path d="M18.90 1.80Q19.80 3.90 21.90 4.80Q19.80 5.70 18.90 7.80Q18.00 5.70 15.90 4.80Q18.00 3.90 18.90 1.80Z"/></svg><span class="lbl" id="mi0" style="left:80.5px">Chat commands</span><svg class="car" style="left:357px" viewBox="0 0 20 20"><path d="M5 1.500L12.500 10L5 18.500"/></svg></div>
<div class="mi" style="top:74px;width:391px"><svg class="ico" viewBox="0 0 24 24"><path d="M2.700 21.300L13.600 10.200" stroke="currentColor" fill="none" stroke-width="1.900"/><path d="M13.600 2.950c-1.100 0-1.800.3-2.500 1L5.300 9.700V17.500" stroke="currentColor" fill="none" stroke-width="1.900"/><path d="M6.300 17.400H12.400L19.700 9.400" stroke="currentColor" fill="none" stroke-width="1.900"/><path d="M9.800 13.900H14.600L17.500 11" stroke="currentColor" fill="none" stroke-width="1.900"/><path d="M18.95 1.85Q19.85 3.95 21.95 4.85Q19.85 5.75 18.95 7.85Q18.05 5.75 15.95 4.85Q18.05 3.95 18.95 1.85Z"/></svg><span class="lbl" id="mi1" style="left:80.5px">Improve writing</span></div>
<div class="mi" style="top:138px;width:391px"><svg class="ico" viewBox="0 0 24 24"><path d="M2 3.900H13.900M2 7.900H13.900M2 11.900H9.950" stroke="currentColor" fill="none" stroke-width="1.900"/><path d="M13.800 22.100V19.700L19.500 14.600a1.500 1.500 0 0 1 2 2.200L15.800 22.100Z" stroke="currentColor" fill="none" stroke-width="1.700" stroke-linejoin="round"/><path d="M18.40 2.75Q19.42 5.13 21.80 6.15Q19.42 7.17 18.40 9.55Q17.38 7.17 15.00 6.15Q17.38 5.13 18.40 2.75Z"/></svg><span class="lbl" id="mi2" style="left:80.5px">Continue writing</span></div>
<div class="mi" style="top:202px;width:391px"><svg class="ico" viewBox="0 0 24 24"><path d="M2.900 15.750L7.500 2.950H9.500L14.100 15.750M4.900 11.400H12.100" stroke="currentColor" fill="none" stroke-width="1.900" stroke-linejoin="miter"/><path d="M10.600 17.200L14.500 20.700L21.400 14" stroke="currentColor" fill="none" stroke-width="1.900"/><path d="M18.40 1.60Q19.42 3.98 21.80 5.00Q19.42 6.02 18.40 8.40Q17.38 6.02 15.00 5.00Q17.38 3.98 18.40 1.60Z"/></svg><span class="lbl" id="mi3" style="left:80.5px">Fix grammar &amp; spelling</span></div>
<div class="mi" style="top:266px;width:391px"><svg class="ico" viewBox="0 0 24 24"><path d="M15.300 7.950H4.950a2 2 0 0 0-2 2V17a2 2 0 0 0 2 2H19a2 2 0 0 0 2-2V10.200" stroke="currentColor" fill="none" stroke-width="2"/><path d="M7.950 8V13.650M12.050 8V13.650M16.050 8V13.650" stroke="currentColor" fill="none" stroke-width="1.850"/><path d="M18.85 4.00Q19.75 6.10 21.85 7.00Q19.75 7.90 18.85 10.00Q17.95 7.90 15.85 7.00Q17.95 6.10 18.85 4.00Z"/></svg><span class="lbl" id="mi4" style="left:80.5px">Change length</span><svg class="car" style="left:357px" viewBox="0 0 20 20"><path d="M5 1.500L12.500 10L5 18.500"/></svg></div>
<div class="mi act" style="top:330px;width:391px"><svg class="ico" viewBox="0 0 24 24"><path d="M3.950 12.350V15.550M7.950 10.600V17.150M11.950 7.800V20M16 10.800V17.150M20.050 12.350V15.550" stroke="currentColor" fill="none" stroke-width="2.050"/><path d="M17.90 3.85Q18.83 6.02 21.00 6.95Q18.83 7.88 17.90 10.05Q16.97 7.88 14.80 6.95Q16.97 6.02 17.90 3.85Z"/></svg><span class="lbl" id="mi5" style="left:80.5px">Change tone</span><svg class="car" style="left:357px" viewBox="0 0 20 20"><path d="M5 1.500L12.500 10L5 18.500"/></svg></div>
<div class="mi" style="top:394px;width:391px"><svg class="ico" viewBox="0 0 24 24"><path d="M2 4.900H13.900M7.950 2.050V4.900M3.700 5.400C5 9.500 7.500 12.500 10.600 14.600M12.300 5.400C11 10.500 7.500 14.500 2.600 17.700" stroke="currentColor" fill="none" stroke-width="1.900"/><path d="M11.800 21.800L15.650 10.500H17.250L21.100 21.800M13.300 18.300H19.600" stroke="currentColor" fill="none" stroke-width="1.900" stroke-linejoin="miter"/><path d="M18.55 1.90Q19.45 4.00 21.55 4.90Q19.45 5.80 18.55 7.90Q17.65 5.80 15.55 4.90Q17.65 4.00 18.55 1.90Z"/></svg><span class="lbl" id="mi6" style="left:80.5px">Translate</span><svg class="car" style="left:357px" viewBox="0 0 20 20"><path d="M5 1.500L12.500 10L5 18.500"/></svg></div>
</div>
<!-- submenu -->
<div class="menu" style="left:577px;top:498px;width:291px;height:340px">
<div class="mi" style="top:10px;width:271px"><span class="lbl" id="sm0" style="left:25px">More casual</span></div>
<div class="mi" style="top:74px;width:271px"><span class="lbl" id="sm1" style="left:25px">More direct</span></div>
<div class="mi" style="top:138px;width:271px"><span class="lbl" id="sm2" style="left:25px">More friendly</span></div>
<div class="mi" style="top:202px;width:271px"><span class="lbl" id="sm3" style="left:25px">More confident</span></div>
<div class="mi act" style="top:266px;width:271px"><span class="lbl" id="sm4" style="left:25px">More professional</span></div>
</div>
</div></div>
</body>
</html>
